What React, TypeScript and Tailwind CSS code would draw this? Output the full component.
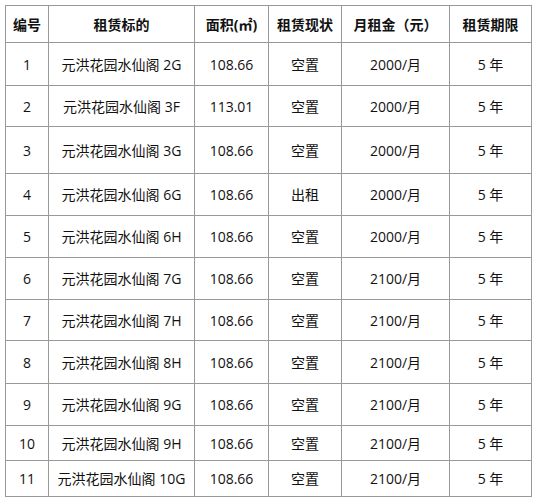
import React from "react";

type Row = {
  no: string;
  name: string;
  area: string;
  state: string;
  rent: string;
  term: string;
  h: string;
};

// 房源列表
const rows: Row[] = [
  { no: "1", name: "元洪花园水仙阁 2G", area: "108.66", state: "空置", rent: "2000/月", term: "5 年", h: "h-[43px]" },
  { no: "2", name: "元洪花园水仙阁 3F", area: "113.01", state: "空置", rent: "2000/月", term: "5 年", h: "h-[41px]" },
  { no: "3", name: "元洪花园水仙阁 3G", area: "108.66", state: "空置", rent: "2000/月", term: "5 年", h: "h-[47px]" },
  { no: "4", name: "元洪花园水仙阁 6G", area: "108.66", state: "出租", rent: "2000/月", term: "5 年", h: "h-[42px]" },
  { no: "5", name: "元洪花园水仙阁 6H", area: "108.66", state: "空置", rent: "2000/月", term: "5 年", h: "h-[42px]" },
  { no: "6", name: "元洪花园水仙阁 7G", area: "108.66", state: "空置", rent: "2100/月", term: "5 年", h: "h-[42px]" },
  { no: "7", name: "元洪花园水仙阁 7H", area: "108.66", state: "空置", rent: "2100/月", term: "5 年", h: "h-[41px]" },
  { no: "8", name: "元洪花园水仙阁 8H", area: "108.66", state: "空置", rent: "2100/月", term: "5 年", h: "h-[43px]" },
  { no: "9", name: "元洪花园水仙阁 9G", area: "108.66", state: "空置", rent: "2100/月", term: "5 年", h: "h-[42px]" },
  { no: "10", name: "元洪花园水仙阁 9H", area: "108.66", state: "空置", rent: "2100/月", term: "5 年", h: "h-[35px]" },
  { no: "11", name: "元洪花园水仙阁 10G", area: "108.66", state: "空置", rent: "2100/月", term: "5 年", h: "h-[36px]" },
];

const cell = "border border-[#999999] text-center p-0 align-middle whitespace-nowrap";

export default function App() {
  return (
    <div className="w-[536px] h-[504px] bg-white pt-[5px] pl-[5px] font-['Open_Sans','Noto_Sans_CJK_SC',sans-serif] text-[14px] text-[#111111]">
      <table className="border-collapse table-fixed w-[526px]">
        <colgroup>
          <col className="w-[43px]" />
          <col className="w-[146px]" />
          <col className="w-[74px]" />
          <col className="w-[73px]" />
          <col className="w-[108px]" />
          <col className="w-[82px]" />
        </colgroup>
        <thead>
          <tr className="h-[37px] font-bold">
            <th className={cell}>编号</th>
            <th className={cell}>租赁标的</th>
            <th className={cell}>面积(㎡)</th>
            <th className={cell}>租赁现状</th>
            <th className={cell}>月租金（元）</th>
            <th className={cell}>租赁期限</th>
          </tr>
        </thead>
        <tbody>
          {rows.map((r) => (
            <tr key={r.no} className={r.h}>
              <td className={cell}>{r.no}</td>
              <td className={cell}>{r.name}</td>
              <td className={cell}>{r.area}</td>
              <td className={cell}>{r.state}</td>
              <td className={cell}>{r.rent}</td>
              <td className={cell}>{r.term}</td>
            </tr>
          ))}
        </tbody>
      </table>
    </div>
  );
}
